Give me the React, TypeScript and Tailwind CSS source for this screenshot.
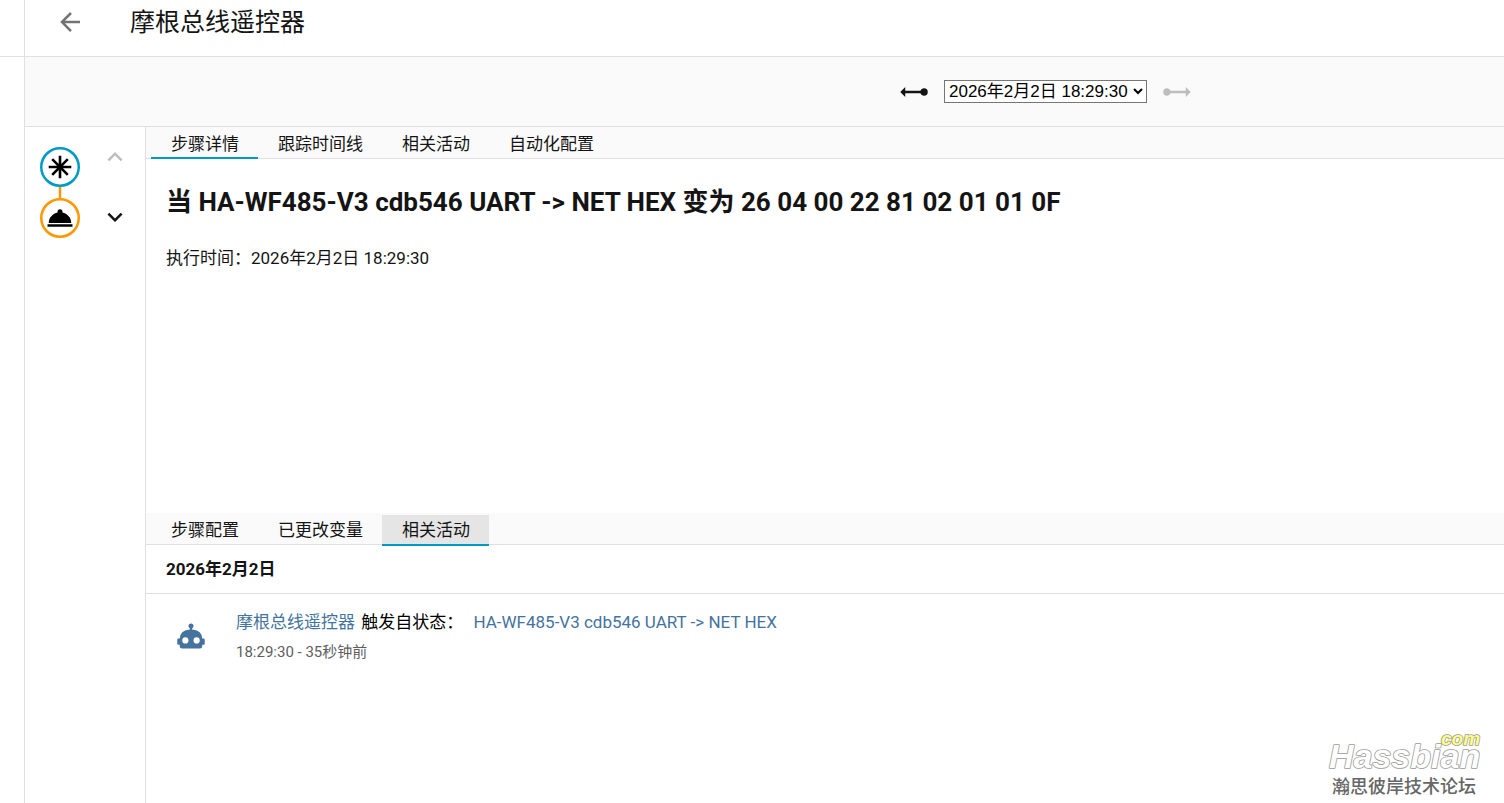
import clsx from "clsx";

const icons = {
  back: "M20,11V13H8L13.5,18.5L12.08,19.92L4.16,12L12.08,4.08L13.5,5.5L8,11H20Z",
  rayEndArrow:
    "M1,12L5,16V13H17.17C17.58,14.17 18.69,15 20,15A3,3 0 0,0 23,12A3,3 0 0,0 20,9C18.69,9 17.58,9.83 17.17,11H5V8L1,12Z",
  rayStartArrow:
    "M23,12L19,16V13H6.83C6.42,14.17 5.31,15 4,15A3,3 0 0,1 1,12A3,3 0 0,1 4,9C5.31,9 6.42,9.83 6.83,11H19V8L23,12Z",
  chevronUp:
    "M7.41,15.41L12,10.83L16.59,15.41L18,14L12,8L6,14L7.41,15.41Z",
  chevronDown:
    "M7.41,8.58L12,13.17L16.59,8.58L18,10L12,16L6,10L7.41,8.58Z",
  robot:
    "M12,2A2,2 0 0,1 14,4C14,4.74 13.6,5.39 13,5.73V7H14A7,7 0 0,1 21,14H22A1,1 0 0,1 23,15V18A1,1 0 0,1 22,19H21V20A2,2 0 0,1 19,22H5A2,2 0 0,1 3,20V19H2A1,1 0 0,1 1,18V15A1,1 0 0,1 2,14H3A7,7 0 0,1 10,7H11V5.73C10.4,5.39 10,4.74 10,4A2,2 0 0,1 12,2M7.5,13A2.5,2.5 0 0,0 5,15.5A2.5,2.5 0 0,0 7.5,18A2.5,2.5 0 0,0 10,15.5A2.5,2.5 0 0,0 7.5,13M16.5,13A2.5,2.5 0 0,0 14,15.5A2.5,2.5 0 0,0 16.5,18A2.5,2.5 0 0,0 19,15.5A2.5,2.5 0 0,0 16.5,13Z",
  roomService:
    "M12,5A2,2 0 0,1 14,7C14,7.24 13.96,7.47 13.88,7.69C17.95,8.5 21,11.91 21,16H3C3,11.91 6.05,8.5 10.12,7.69C10.04,7.47 10,7.24 10,7A2,2 0 0,1 12,5M22,19H2V17H22V19Z",
};

function Icon({ path }: { path: string }) {
  return (
    <svg viewBox="0 0 24 24" className="size-[30px]" fill="currentColor">
      <path d={path} />
    </svg>
  );
}

function IconButton({
  path,
  label,
  disabled,
}: {
  path: string;
  label: string;
  disabled?: boolean;
}) {
  return (
    <button
      type="button"
      aria-label={label}
      disabled={disabled}
      className="flex size-[60px] shrink-0 items-center justify-center disabled:text-[#bdbdbd]"
    >
      <Icon path={path} />
    </button>
  );
}

function Tabs({
  items,
  active,
  focused,
}: {
  items: string[];
  active: string;
  focused?: boolean;
}) {
  return (
    <div
      role="tablist"
      className="flex h-8 items-end border-b border-[#e0e0e0] bg-[#fafafa] pl-[5px]"
    >
      {items.map((item) => (
        <button
          key={item}
          type="button"
          role="tab"
          aria-selected={item === active}
          className={clsx(
            "h-[31px] border-b-2 pr-[19px] pl-5 text-[17px] leading-6",
            focused ? "-mb-0.5" : "-mb-px pt-0.5",
            item === active ? "border-[#009ac7]" : "border-transparent",
            item === active && focused && "bg-[#e5e5e5]"
          )}
        >
          {item}
        </button>
      ))}
    </div>
  );
}

function TraceGraph() {
  return (
    <svg viewBox="0 0 40 92" className="mt-5 ml-[15px] h-[92px] w-10 shrink-0">
      <path d="M20 40V51" stroke="#ff9800" strokeWidth="2.5" />
      <circle cx="20" cy="20" r="18.75" fill="#fff" stroke="#009ac7" strokeWidth="2.5" />
      <path
        d="M20 8.7V31.3M8.7 20H31.3M12.2 12.2L27.8 27.8M27.8 12.2L12.2 27.8"
        stroke="#000"
        strokeWidth="2.6"
      />
      <circle cx="20" cy="71" r="18.75" fill="#fff" stroke="#ff9800" strokeWidth="2.5" />
      <path d={icons.roomService} transform="translate(5 56) scale(1.25)" />
    </svg>
  );
}

export default function App() {
  return (
    <div className="relative flex min-h-screen bg-white font-[Roboto,'Noto_Sans_CJK_SC',sans-serif] text-[#141414]">
      <aside className="w-[25px] shrink-0 border-r border-[#e0e0e0]">
        <div className="h-[57px] border-b border-[#e0e0e0]" />
      </aside>

      <div className="flex min-w-0 flex-1 flex-col">
        <header className="border-b border-[#e0e0e0] pb-3">
          <div className="flex h-11 items-center pl-[15px]">
            <button
              type="button"
              aria-label="返回"
              className="mr-[30px] flex w-[60px] items-center justify-center text-[#737373]"
            >
              <Icon path={icons.back} />
            </button>
            <h1 className="pt-0.5 text-[25px] leading-8">摩根总线遥控器</h1>
          </div>
        </header>

        <div className="flex h-[70px] items-center justify-center border-b border-[#e0e0e0] bg-[#fafafa] pl-[562px]">
          <IconButton path={icons.rayEndArrow} label="较早的轨迹" />
          <select
            aria-label="轨迹"
            className="h-[23px] w-[203px] border border-[#767676] bg-white font-['Liberation_Sans','Noto_Sans_CJK_SC',sans-serif] text-[17px] leading-5 text-black"
          >
            <option>2026年2月2日 18:29:30</option>
          </select>
          <IconButton path={icons.rayStartArrow} label="较新的轨迹" disabled />
        </div>

        <div className="flex flex-1">
          <nav className="flex w-[121px] shrink-0 justify-between border-r border-[#e0e0e0]">
            <TraceGraph />
            <div>
              <IconButton path={icons.chevronUp} label="上一步" disabled />
              <IconButton path={icons.chevronDown} label="下一步" />
            </div>
          </nav>

          <main className="min-w-0 flex-1">
            <Tabs
              items={["步骤详情", "跟踪时间线", "相关活动", "自动化配置"]}
              active="步骤详情"
            />
            <section className="min-h-[354px] px-5 pt-[23px]">
              <h2 className="mb-6 text-[26px] leading-10 font-bold">
                当 HA-WF485-V3 cdb546 UART -&gt; NET HEX 变为 26 04 00 22 81 02
                01 01 0F
              </h2>
              <p className="text-[17px] leading-6">
                执行时间：2026年2月2日 18:29:30
              </p>
            </section>

            <Tabs
              items={["步骤配置", "已更改变量", "相关活动"]}
              active="相关活动"
              focused
            />
            <section>
              <h3 className="border-b border-[#e0e0e0] px-5 py-3 text-[17px] leading-6 font-bold">
                2026年2月2日
              </h3>
              <div className="flex items-center pt-3.5 pl-[30px]">
                <span className="mr-[30px] text-[#44739e]">
                  <Icon path={icons.robot} />
                </span>
                <div>
                  <p className="text-[17px] leading-7 text-black">
                    <a href="#automation" className="mr-0.5 text-[#44739e]">
                      摩根总线遥控器
                    </a>{" "}
                    触发自状态：{" "}
                    <a href="#entity" className="ml-1.5 text-[#44739e]">
                      HA-WF485-V3 cdb546 UART -&gt; NET HEX
                    </a>
                  </p>
                  <p className="mt-1 text-[15px] leading-6 text-[#5e5e5e]">
                    18:29:30 - 35秒钟前
                  </p>
                </div>
              </div>
            </section>
          </main>
        </div>
      </div>

      {/* forum watermark */}
      <div className="absolute right-4 bottom-1 flex flex-col items-end font-['Liberation_Sans','Noto_Sans_CJK_SC',sans-serif]">
        <svg viewBox="0 0 164 50" className="h-[50px] w-[164px]" aria-label="Hassbian.com">
          <g
            fontFamily="Liberation Sans, sans-serif"
            fontWeight="bold"
            fontStyle="italic"
            stroke="#999"
            strokeWidth="1.6"
            paintOrder="stroke"
            strokeLinejoin="round"
          >
            <text x="5" y="43" fontSize="34" fill="#fff">
              Hassbian
            </text>
            <text x="117" y="20" fontSize="19" fill="#ffff80">
              com
            </text>
          </g>
        </svg>
        <p className="mr-3 text-[18px] leading-6 font-medium text-[#666]">
          瀚思彼岸技术论坛
        </p>
      </div>
    </div>
  );
}
